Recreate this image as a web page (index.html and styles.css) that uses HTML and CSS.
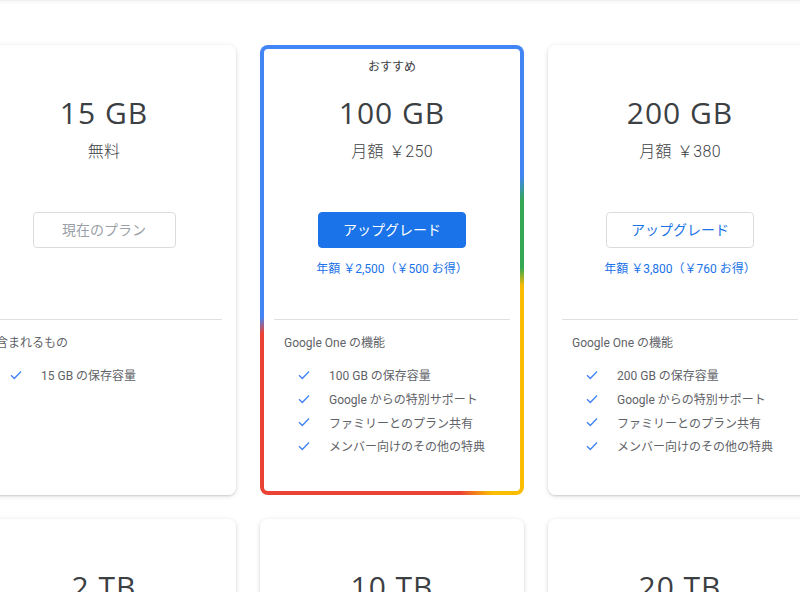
FILE: index.html
```html
<!DOCTYPE html>
<html lang="ja">
<head>
  <meta charset="UTF-8" />
  <meta name="viewport" content="width=device-width, initial-scale=1.0" />
  <title>Google One - プラン</title>
  <link rel="stylesheet" href="styles.css">
</head>
<body>

  <!-- Header shadow edge (header itself is scrolled out of view) -->
  <div class="topbar"></div>

  <main class="plans">

    <!-- Row 1 -->
    <section class="plan">
      <div class="plan-inner">
        <div class="plan-label"></div>
        <h2 class="plan-size">15 GB</h2>
        <div class="plan-price">無料</div>
        <button class="plan-btn current" disabled>現在のプラン</button>
        <div class="plan-annual"></div>
        <hr class="plan-divider">
        <div class="plan-features-title">含まれるもの</div>
        <ul class="plan-features">
          <li><svg class="check" viewBox="0 0 12 10"><path d="M1 5.2 L4.3 8.4 L11 1.6" /></svg>15 GB の保存容量</li>
        </ul>
      </div>
    </section>

    <section class="plan recommended">
      <div class="plan-inner">
        <div class="plan-label">おすすめ</div>
        <h2 class="plan-size">100 GB</h2>
        <div class="plan-price">月額 ￥250</div>
        <button class="plan-btn primary">アップグレード</button>
        <div class="plan-annual">年額 ￥2,500（￥500 お得）</div>
        <hr class="plan-divider">
        <div class="plan-features-title">Google One の機能</div>
        <ul class="plan-features">
          <li><svg class="check" viewBox="0 0 12 10"><path d="M1 5.2 L4.3 8.4 L11 1.6" /></svg>100 GB の保存容量</li>
          <li><svg class="check" viewBox="0 0 12 10"><path d="M1 5.2 L4.3 8.4 L11 1.6" /></svg>Google からの特別サポート</li>
          <li><svg class="check" viewBox="0 0 12 10"><path d="M1 5.2 L4.3 8.4 L11 1.6" /></svg>ファミリーとのプラン共有</li>
          <li><svg class="check" viewBox="0 0 12 10"><path d="M1 5.2 L4.3 8.4 L11 1.6" /></svg>メンバー向けのその他の特典</li>
        </ul>
      </div>
    </section>

    <section class="plan">
      <div class="plan-inner">
        <div class="plan-label"></div>
        <h2 class="plan-size">200 GB</h2>
        <div class="plan-price">月額 ￥380</div>
        <button class="plan-btn outline">アップグレード</button>
        <div class="plan-annual">年額 ￥3,800（￥760 お得）</div>
        <hr class="plan-divider">
        <div class="plan-features-title">Google One の機能</div>
        <ul class="plan-features">
          <li><svg class="check" viewBox="0 0 12 10"><path d="M1 5.2 L4.3 8.4 L11 1.6" /></svg>200 GB の保存容量</li>
          <li><svg class="check" viewBox="0 0 12 10"><path d="M1 5.2 L4.3 8.4 L11 1.6" /></svg>Google からの特別サポート</li>
          <li><svg class="check" viewBox="0 0 12 10"><path d="M1 5.2 L4.3 8.4 L11 1.6" /></svg>ファミリーとのプラン共有</li>
          <li><svg class="check" viewBox="0 0 12 10"><path d="M1 5.2 L4.3 8.4 L11 1.6" /></svg>メンバー向けのその他の特典</li>
        </ul>
      </div>
    </section>

    <!-- Row 2 -->
    <section class="plan">
      <div class="plan-inner">
        <div class="plan-label"></div>
        <h2 class="plan-size">2 TB</h2>
        <div class="plan-price">月額 ￥1,300</div>
      </div>
    </section>

    <section class="plan">
      <div class="plan-inner">
        <div class="plan-label"></div>
        <h2 class="plan-size">10 TB</h2>
        <div class="plan-price">月額 ￥6,500</div>
      </div>
    </section>

    <section class="plan">
      <div class="plan-inner">
        <div class="plan-label"></div>
        <h2 class="plan-size">20 TB</h2>
        <div class="plan-price">月額 ￥13,000</div>
      </div>
    </section>

  </main>

</body>
</html>
```

FILE: styles.css
```css
:root {
  --text: #3c4043;
  --text-soft: #5f6368;
  --blue: #1a73e8;
  --check: #4285f4;
  --line: #dadce0;
  --muted: #9aa0a6;
  --font: Roboto, "Noto Sans CJK JP", sans-serif;
  --big-font: "Open Sans", "Noto Sans CJK JP", sans-serif;
}

* {
  box-sizing: border-box;
  margin: 0;
  padding: 0;
}

body {
  background: #fff;
  color: var(--text);
  font-family: var(--font);
  overflow: hidden;
}

.topbar {
  height: 1px;
  background: #eef0f1;
  box-shadow: 0 1px 3px rgba(60, 64, 67, 0.12);
}

/* three fixed-width columns, page is scrolled a bit so left card is cut */
.plans {
  display: grid;
  grid-template-columns: repeat(3, 264px);
  gap: 24px;
  width: max-content;
  margin: 44px 0 0 -28px;
}

.plan {
  height: 450px;
  background: #fff;
  border-radius: 8px;
  box-shadow: 0 1px 2px rgba(60, 64, 67, 0.2), 0 1px 4px 1px rgba(60, 64, 67, 0.1);
}

/* Google colours around the recommended card */
.plan.recommended {
  padding: 4px;
  box-shadow: none;
  background: conic-gradient(
    #4285f4 0deg 54deg,
    #34a853 62deg 89deg,
    #fbbc04 97deg 156deg,
    #ea4335 163deg 244deg,
    #4285f4 250deg 360deg
  );
}

.plan-inner {
  height: 100%;
  background: #fff;
  border-radius: 8px;
  padding: 14px 24px 0;
  display: flex;
  flex-direction: column;
  align-items: center;
  text-align: center;
}

.recommended .plan-inner {
  border-radius: 4px;
  padding: 10px 20px 0;
}

.plan-label {
  height: 16px;
  font-size: 12px;
  line-height: 16px;
  color: var(--text);
}

.plan-size {
  margin-top: 20px;
  font-family: var(--big-font);
  font-weight: 400;
  font-size: 30px;
  line-height: 36px;
  letter-spacing: 1px;
  color: var(--text);
}

.plan-price {
  margin-top: 9px;
  font-size: 16px;
  font-weight: 300;
  line-height: 24px;
  word-spacing: 1px;
  letter-spacing: 0.3px;
}

.plan-btn {
  margin-top: 48px;
  height: 36px;
  min-width: 143px;
  padding: 0 24px 3px;
  border-radius: 4px;
  border: 1px solid var(--line);
  background: #fff;
  font-family: var(--font);
  font-size: 14px;
  cursor: pointer;
}

.plan-btn.current {
  color: var(--muted);
  cursor: default;
}

.plan-btn.primary {
  background: var(--blue);
  border-color: var(--blue);
  color: #fff;
}

.plan-btn.outline {
  color: var(--blue);
}

.plan-annual {
  margin-top: 13px;
  height: 16px;
  font-size: 12px;
  line-height: 16px;
  color: var(--blue);
}

.plan-divider {
  align-self: stretch;
  margin: 42px -10px 0;
  border: none;
  border-top: 1px solid #e0e0e0;
}

.plan-features-title {
  align-self: stretch;
  text-align: left;
  margin-top: 15px;
  font-size: 12px;
  line-height: 16px;
  color: var(--text-soft);
}

.plan-features {
  align-self: stretch;
  list-style: none;
  margin-top: 12px;
  padding-left: 14px;
  text-align: left;
}

.plan-features li {
  display: flex;
  align-items: center;
  height: 23.7px;
  font-size: 12px;
  color: var(--text-soft);
}

.check {
  width: 12px;
  height: 10px;
  margin-right: 19px;
  flex-shrink: 0;
  fill: none;
  stroke: var(--check);
  stroke-width: 1.4;
}
```
